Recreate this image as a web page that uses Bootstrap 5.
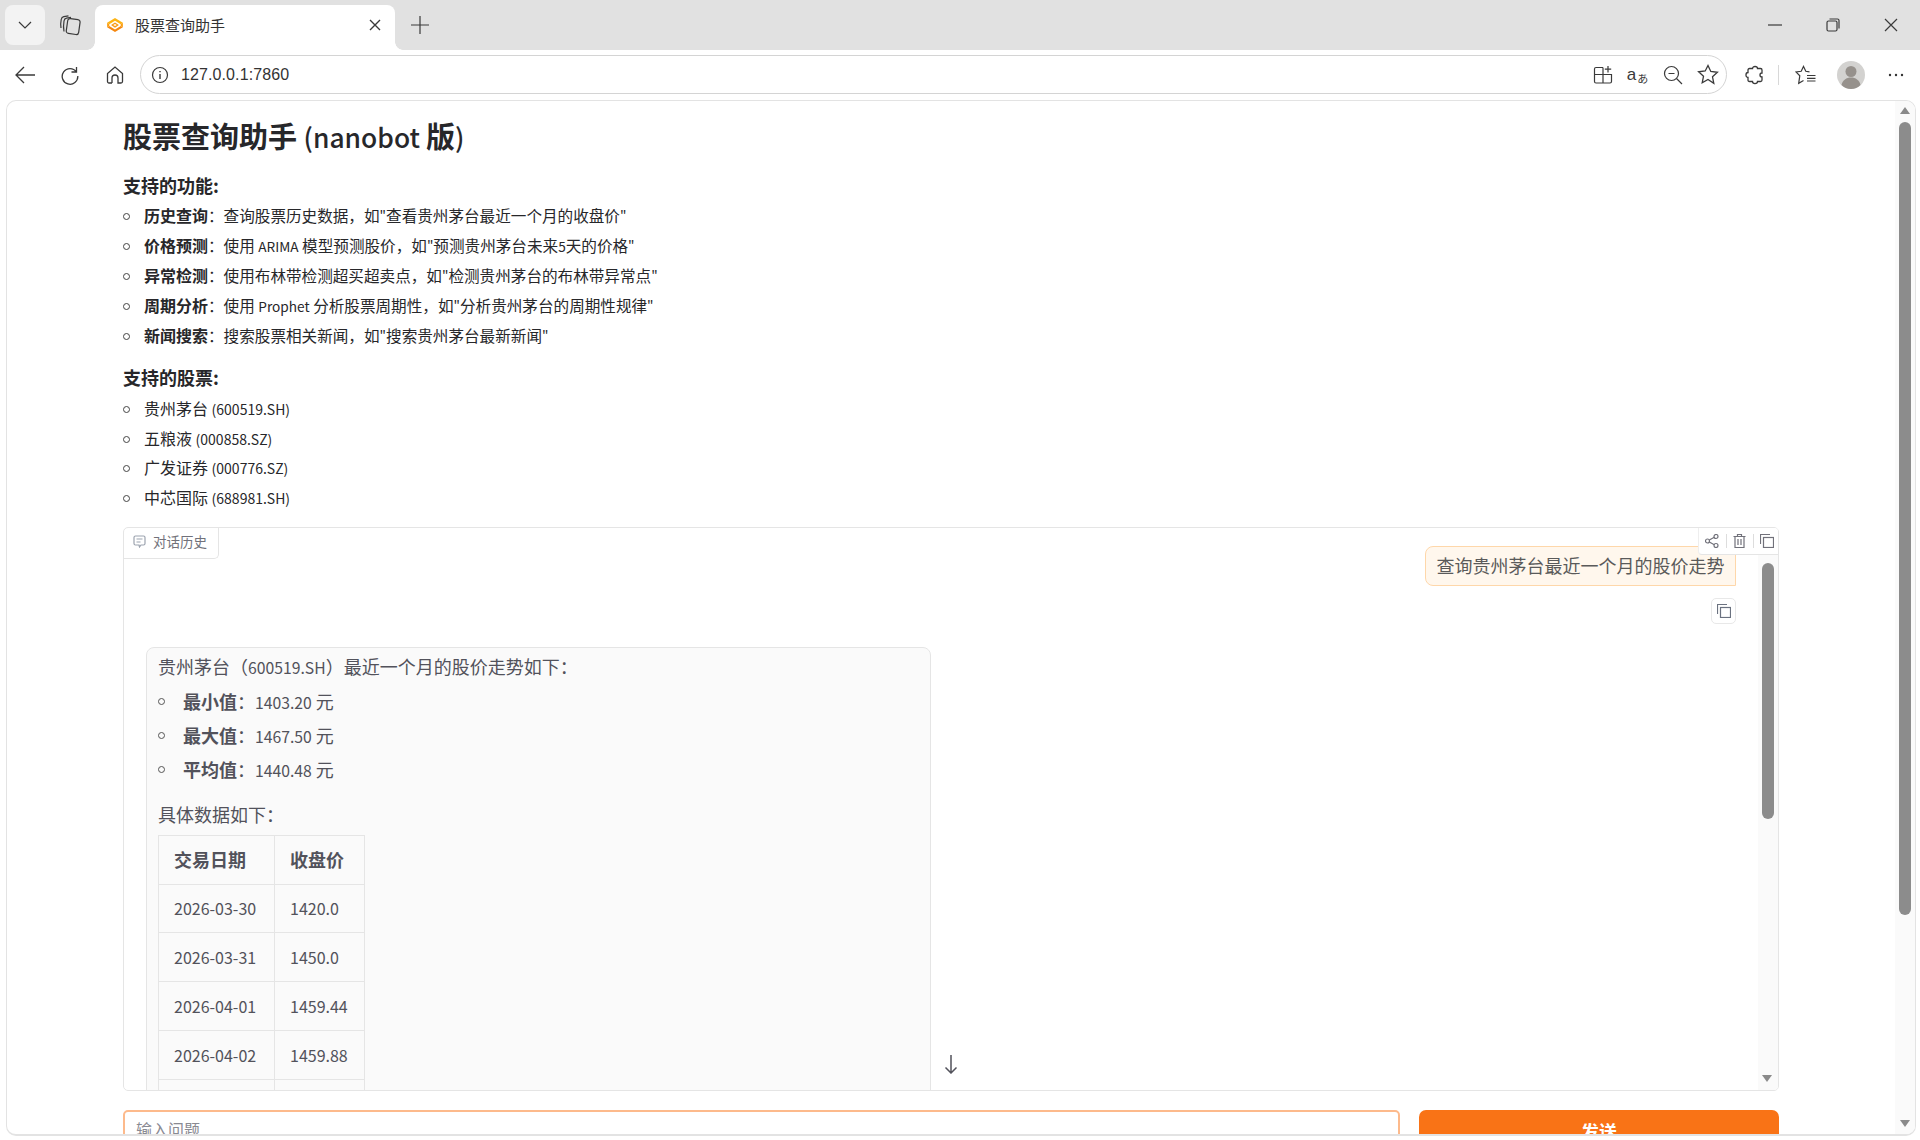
<!DOCTYPE html>
<html lang="zh">
<head>
<meta charset="utf-8">
<title>股票查询助手</title>
<link href="https://cdn.jsdelivr.net/npm/bootstrap@5.3.0/dist/css/bootstrap.min.css" rel="stylesheet">
<style>
html,body{height:1140px;overflow:hidden}
body{background:#fff;font-family:"Noto Sans CJK SC","Liberation Sans",sans-serif;color:#27272a;font-size:16px}
svg{display:block;fill:none;stroke:#3a3a3a;stroke-width:1.2}
.lat{font-size:.875em}
.tabbar{height:50px;background:#e1e1e1;padding:5px 0 0 5px}
.tabmenu{width:40px;height:40px;background:#f3f3f3;border-radius:8px}
.tabcoll{width:50px;height:40px}
.tabitem{position:relative;width:300px;height:45px;background:#fff;border-radius:8px 8px 0 0;padding:0 14px 5px 12px;font-size:15px;color:#333}
.tabitem::before,.tabitem::after{content:"";position:absolute;bottom:0;width:8px;height:8px}
.tabitem::before{left:-8px;background:radial-gradient(circle at 0 0,transparent 7.5px,#fff 8px)}
.tabitem::after{right:-8px;background:radial-gradient(circle at 100% 0,transparent 7.5px,#fff 8px)}
.tabtitle{margin-left:12px}
.tabplus{width:50px;height:40px}
.wincontrols{margin-left:auto}
.winbtn{width:58px;height:40px}
.toolbar{height:50px;padding:5px 0 6px 0}
.navbtn{width:45px}
.firstnav{margin-left:2px}
.addr{width:1587px;height:39px;margin-left:3px;border:1.5px solid #d4d4d4;border-radius:20px;padding:0 0 0 10px;font-size:16px;color:#333;font-family:"Liberation Sans",sans-serif}
.addr-text{margin-left:12px;letter-spacing:.1px}
.addr-ico{width:35px}
.addr-ico.last{margin-right:1px}
.tb-ico{width:45px}
.tb-ico.puzzle{margin-left:5px}
.tb-sep{width:1px;height:20px;background:#d8d8d8;margin:0 4px 0 1px}
.transa{font-size:17px;line-height:20px;font-family:"Liberation Sans",sans-serif;color:#3a3a3a}
.transb{font-size:11px;line-height:14px;font-family:"Noto Sans CJK JP",sans-serif;color:#3a3a3a;margin-top:6px;margin-left:1px}
.frame{height:1036px;margin:0 4px 0 6px;border:1.5px solid #e3e3e3;border-bottom-width:2px;border-radius:10px;overflow:hidden}
.mainpane{flex:1 1 auto;min-width:0;padding:0 0 0 116px;overflow:hidden}
.pagetitle{font-size:29px;font-weight:700;line-height:36px;margin:16px 0 0;color:#27272a;white-space:nowrap}
.pagetitle .titlelat{font-size:.91em;font-weight:500}
.sectitle{font-size:18px;font-weight:700;line-height:24px;margin:0;color:#27272a}
.sectitle.one{margin-top:18px}
.sectitle.two{margin-top:15px}
.bulleted{list-style:none;margin:0;padding:0}
.bulleted li{position:relative;padding-left:21px;height:30px;line-height:30px;font-size:16px;color:#27272a}
.bulleted li::before{content:"";position:absolute;left:0;top:13px;width:7px;height:7px;border:1px solid #444;border-radius:50%}
.bulleted b,.botlist b{font-weight:700}
.funcs{margin-top:3px}
.funcs li{font-size:15.6px}
.funcs b{font-size:16px}
.stocks{margin-top:4px}
.stocks li{height:29.700px}
.chatbox{position:relative;width:1656px;height:564px;margin-top:15.500px;border:1.5px solid #e5e5e5;border-radius:5px;overflow:hidden}
.chatlabel{width:95px;height:31px;border-right:1.5px solid #e5e5e5;border-bottom:1.5px solid #e5e5e5;border-radius:0 0 5px 0;font-size:13.5px;color:#71717a;padding:0 0 4px 9px}
.chatlabel span{margin-left:7px}
.toolgroup{position:absolute;right:0;top:0;width:80px;height:27px;background:#fff;border-left:1px solid #eee;border-bottom:1px solid #e5e5e5;border-radius:0 0 0 4px;z-index:3;padding:0 4px 0 2px}
.tooldiv{width:1px;height:14px;background:#ddd}
.chatmain{position:absolute;inset:0;padding:18px 0 0 22px}
.userwrap{width:1590px}
.userbubble{width:311px;height:40px;background:#fff7ed;border:1.5px solid #fed7aa;border-radius:8px 0 0 8px;font-size:18px;color:#5a5a5a;line-height:37px;padding-left:10.500px;white-space:nowrap}
.copybtn{width:25px;height:26px;border:1.5px solid #e8e8e8;border-radius:5px;margin-top:12px}
.botbubble{width:785px;height:600px;margin-top:22.500px;background:#fafafa;border:1.5px solid #e5e5e5;border-radius:8px 8px 0 0;padding:3px 11px 0;font-size:18px;color:#52525b}
.botp{line-height:31px;margin:0 0 1px}
.botlist{list-style:none;margin:0;padding:0}
.botlist li{position:relative;height:34px;line-height:34px;padding-left:25px}
.botlist li::before{content:"";position:absolute;left:0;top:14px;width:7px;height:7px;border:1px solid #555;border-radius:50%}
.botp2{line-height:34px;margin:11px 0 4px}
.pricetable{border-collapse:collapse;font-size:16px;color:#52525b}
.pricetable th,.pricetable td{border:1.5px solid #e5e5e5;height:48.800px;padding:0 15px;font-weight:400}
.pricetable th{font-weight:700;font-size:18px}
.cola{width:116px}.colb{width:90px}
.arrowdown{position:absolute;left:810px;top:519px;width:34px;height:34px;border-radius:50%;background:#fff;z-index:2}
.innerscroll{position:absolute;right:0;top:0;bottom:0;width:20px;background:#fafafa}
.innerthumb{position:absolute;left:4px;top:35px;width:11.500px;height:256px;background:#8c8c8c;border-radius:6px}
.tri-down{position:absolute;left:4px;bottom:8px;width:0;height:0;border-left:5px solid transparent;border-right:5px solid transparent;border-top:7px solid #8a8a8a}
.sendrow{margin-top:18.500px;width:1656px;gap:19px}
.askinput{flex:1 1 auto;height:80px;border:2px solid #fdba8c;border-radius:5px;padding:7px 11px;font-size:16px;color:#8a8a92;line-height:20px}
.sendbtn{width:360px;height:80px;background:#f97316;border-radius:7px;color:#fff;font-weight:700;font-size:18px;text-align:center;line-height:42px}
.pagescroll{width:20px;background:#fafafa;position:relative;flex:0 0 20px}
.pagethumb{position:absolute;left:4px;top:21px;width:12px;height:793px;background:#8c8c8c;border-radius:6px}
.tri-up{position:absolute;left:5px;top:6px;width:0;height:0;border-left:5px solid transparent;border-right:5px solid transparent;border-bottom:7px solid #8a8a8a}
.tri-down2{position:absolute;left:5px;bottom:7px;width:0;height:0;border-left:5px solid transparent;border-right:5px solid transparent;border-top:7px solid #8a8a8a}
</style>
</head>
<body>
<div class="tabbar d-flex align-items-start">
  <div class="tabmenu d-flex align-items-center justify-content-center"><svg width="14" height="8" viewBox="0 0 14 8"><path d="M1 1l6 6 6-6"/></svg></div>
  <div class="tabcoll d-flex align-items-center justify-content-center"><svg width="22" height="22" viewBox="0 0 22 22"><rect x="8" y="5" width="12.500" height="15" rx="2.500" transform="rotate(8 14 12)"/><path d="M5 17.500C4.300 14 4.500 10 5 7c.2-1.500 1-2.500 2.500-2.800L12 3.300M2 14c-.5-3-.3-6 .2-8.500C2.500 4 3.300 3 4.800 2.700L9.500 1.800"/></svg></div>
  <div class="tabitem d-flex align-items-center">
    <svg width="16" height="14" viewBox="0 0 18 16" style="stroke:none"><path d="M9 0l9 5.500-2.500 1.500L9 3 2.500 7 0 5.500z" fill="#fdb414"/><path d="M0 10.500L2.500 9 9 13l6.500-4 2.500 1.500L9 16z" fill="#f5870f"/><path d="M0 5.500L2.500 7 2.500 9 0 10.500zM18 5.500L15.500 7v2l2.500 1.500z" fill="#fb9f12"/><path d="M9 5l4.500 3L9 11 4.500 8zM9 6.800L7 8l2 1.200L11 8z" fill="#f99a12" fill-rule="evenodd"/></svg>
    <span class="tabtitle">股票查询助手</span>
    <svg class="ms-auto" width="12" height="12" viewBox="0 0 12 12"><path d="M1 1l10 10M11 1L1 11" stroke-width="1.400"/></svg>
  </div>
  <div class="tabplus d-flex align-items-center justify-content-center"><svg width="20" height="20" viewBox="0 0 20 20"><path d="M10 1v18M1 10h18"/></svg></div>
  <div class="wincontrols d-flex">
    <div class="winbtn d-flex align-items-center justify-content-center"><svg width="14" height="2" viewBox="0 0 14 2"><path d="M0 1h14"/></svg></div>
    <div class="winbtn d-flex align-items-center justify-content-center"><svg width="14" height="14" viewBox="0 0 14 14"><rect x="1" y="3" width="10" height="10" rx="1.500"/><path d="M3.500 1h8a1.500 1.500 0 0 1 1.500 1.500v8"/></svg></div>
    <div class="winbtn d-flex align-items-center justify-content-center"><svg width="14" height="14" viewBox="0 0 14 14"><path d="M1 1l12 12M13 1L1 13"/></svg></div>
  </div>
</div>
<div class="toolbar d-flex align-items-center">
  <div class="navbtn firstnav d-flex justify-content-center"><svg width="22" height="20" viewBox="0 0 22 20"><path d="M21 10H2M10 2l-8 8 8 8" stroke-width="1.300"/></svg></div>
  <div class="navbtn d-flex justify-content-center"><svg width="20" height="20" viewBox="0 0 20 20"><path d="M16.500 2v5h-5M16.400 7A7.800 7.800 0 1 0 17.800 11" stroke-width="1.300"/></svg></div>
  <div class="navbtn d-flex justify-content-center"><svg width="20" height="20" viewBox="0 0 20 20"><path d="M7 18H4a1.500 1.500 0 0 1-1.500-1.500V8.500L10 2l7.500 6.500v8A1.500 1.500 0 0 1 16 18h-3v-5a3 3 0 0 0-6 0v5" stroke-width="1.300"/></svg></div>
  <div class="addr d-flex align-items-center">
    <svg width="18" height="18" viewBox="0 0 18 18"><circle cx="9" cy="9" r="7.500"/><path d="M9 8v5M9 5v1.300" stroke-width="1.400"/></svg>
    <span class="addr-text">127.0.0.1:7860</span>
    <div class="ms-auto d-flex align-items-center">
      <div class="addr-ico d-flex justify-content-center"><svg width="20" height="20" viewBox="0 0 20 20"><path d="M10 2.500H3A1.500 1.500 0 0 0 1.500 4v12.500A1.500 1.500 0 0 0 3 18h14a1.500 1.500 0 0 0 1.500-1.500V9.500H1.500M10 2.500V18M15 1v6.500M11.800 4.200h6.400"/></svg></div>
      <div class="addr-ico d-flex justify-content-center"><span class="transa">a</span><span class="transb">&#x3042;</span></div>
      <div class="addr-ico d-flex justify-content-center"><svg width="20" height="20" viewBox="0 0 20 20"><circle cx="8.500" cy="8.500" r="7"/><path d="M5.500 8.500h6M13.500 13.500l5.500 5.500"/></svg></div>
      <div class="addr-ico last d-flex justify-content-center"><svg width="22" height="21" viewBox="0 0 22 21"><path d="M11 1.500l2.800 6 6.600.8-4.900 4.500 1.300 6.500L11 15.500l-5.800 3.300 1.300-6.500-4.900-4.500 6.600-.8z" stroke-width="1.300"/></svg></div>
    </div>
  </div>
  <div class="tb-ico puzzle d-flex justify-content-center"><svg width="20" height="20" viewBox="0 0 20 20"><path d="M7.500 3.500C7.500.8 12.500.8 12.500 3.500H15.500C16.500 3.500 17 4 17 5V8C14.300 8 14.300 12 17 12V15C17 16 16.500 16.500 15.500 16.500H12.500C12.500 19.200 7.500 19.200 7.500 16.500H4.500C3.500 16.500 3 16 3 15V12.500C.3 12.500.3 7.500 3 7.500V5C3 4 3.500 3.500 4.500 3.500Z" stroke-width="1.300"/></svg></div>
  <div class="tb-sep"></div>
  <div class="tb-ico d-flex justify-content-center"><svg width="22" height="20" viewBox="0 0 22 20"><path d="M14.500 6.800L10.800 6.300 8.500 1.500 6.200 6.300 1 7 4.800 10.700 3.700 18.300 8.500 15.600M12 10.500h8.500M12 13.300h8.500M12 16h8.500" stroke-width="1.200"/></svg></div>
  <div class="tb-ico d-flex justify-content-center"><svg width="28" height="28" viewBox="0 0 28 28" style="stroke:none"><circle cx="14" cy="14" r="14" fill="#d3d2d0"/><circle cx="14" cy="10.500" r="5.500" fill="#96918c"/><path d="M4.500 24c1-5 5-7.500 9.500-7.500s8.500 2.500 9.500 7.500A14 14 0 0 1 14 28a14 14 0 0 1-9.500-4z" fill="#96918c"/></svg></div>
  <div class="tb-ico d-flex justify-content-center"><svg width="16" height="4" viewBox="0 0 16 4" style="stroke:none"><circle cx="2" cy="2" r="1.200" fill="#333"/><circle cx="8" cy="2" r="1.200" fill="#333"/><circle cx="14" cy="2" r="1.200" fill="#333"/></svg></div>
</div>
<div class="frame d-flex">
  <main class="mainpane">
    <h1 class="pagetitle">股票查询助手 <span class="titlelat">(nanobot </span>版<span class="titlelat">)</span></h1>
    <h2 class="sectitle one">支持的功能:</h2>
    <ul class="bulleted funcs">
      <li><b>历史查询</b>&#xFF1A;查询股票历史数据&#xFF0C;如<span class="lat">"</span>查看贵州茅台最近一个月的收盘价<span class="lat">"</span></li>
      <li><b>价格预测</b>&#xFF1A;使用 <span class="lat">ARIMA</span> 模型预测股价&#xFF0C;如<span class="lat">"</span>预测贵州茅台未来<span class="lat">5</span>天的价格<span class="lat">"</span></li>
      <li><b>异常检测</b>&#xFF1A;使用布林带检测超买超卖点&#xFF0C;如<span class="lat">"</span>检测贵州茅台的布林带异常点<span class="lat">"</span></li>
      <li><b>周期分析</b>&#xFF1A;使用 <span class="lat">Prophet</span> 分析股票周期性&#xFF0C;如<span class="lat">"</span>分析贵州茅台的周期性规律<span class="lat">"</span></li>
      <li><b>新闻搜索</b>&#xFF1A;搜索股票相关新闻&#xFF0C;如<span class="lat">"</span>搜索贵州茅台最新新闻<span class="lat">"</span></li>
    </ul>
    <h2 class="sectitle two">支持的股票:</h2>
    <ul class="bulleted stocks">
      <li>贵州茅台 <span class="lat">(600519.SH)</span></li>
      <li>五粮液 <span class="lat">(000858.SZ)</span></li>
      <li>广发证券 <span class="lat">(000776.SZ)</span></li>
      <li>中芯国际 <span class="lat">(688981.SH)</span></li>
    </ul>
    <section class="chatbox">
      <div class="chatmain">
        <div class="userwrap d-flex flex-column align-items-end">
          <div class="userbubble">查询贵州茅台最近一个月的股价走势</div>
          <div class="copybtn d-flex align-items-center justify-content-center"><svg width="14" height="14" viewBox="0 0 14 14" style="stroke:#6b7280"><rect x="3.500" y="3.500" width="10" height="10"/><path d="M.5 10V.5H10"/></svg></div>
        </div>
        <div class="botbubble">
          <p class="botp">贵州茅台&#xFF08;<span class="lat">600519.SH</span>&#xFF09;最近一个月的股价走势如下&#xFF1A;</p>
          <ul class="botlist">
            <li><b>最小值</b>&#xFF1A;<span class="lat">1403.20</span> 元</li>
            <li><b>最大值</b>&#xFF1A;<span class="lat">1467.50</span> 元</li>
            <li><b>平均值</b>&#xFF1A;<span class="lat">1440.48</span> 元</li>
          </ul>
          <p class="botp2">具体数据如下&#xFF1A;</p>
          <table class="pricetable">
            <tr><th class="cola">交易日期</th><th class="colb">收盘价</th></tr>
            <tr><td>2026-03-30</td><td>1420.0</td></tr>
            <tr><td>2026-03-31</td><td>1450.0</td></tr>
            <tr><td>2026-04-01</td><td>1459.44</td></tr>
            <tr><td>2026-04-02</td><td>1459.88</td></tr>
            <tr><td>&nbsp;</td><td>&nbsp;</td></tr>
          </table>
        </div>
      </div>
      <div class="chatlabel d-flex align-items-center position-relative">
        <svg width="13" height="13" viewBox="0 0 13 13" style="stroke:#9ca3af"><path d="M1 2.500A1.500 1.500 0 0 1 2.500 1h8A1.500 1.500 0 0 1 12 2.500v6A1.500 1.500 0 0 1 10.500 10H8l-1.500 2L6 10H2.500A1.500 1.500 0 0 1 1 8.500zM3.500 4h6M3.500 7h4"/></svg>
        <span>对话历史</span>
      </div>
      <div class="toolgroup d-flex align-items-center justify-content-between">
        <svg class="ms-1" width="14" height="14" viewBox="0 0 14 14" style="stroke:#71717a"><circle cx="2.500" cy="7" r="2"/><circle cx="11" cy="2.500" r="2"/><circle cx="11" cy="11.500" r="2"/><path d="M4.300 6l5-2.800M4.300 8l5 2.800"/></svg>
        <div class="tooldiv"></div>
        <svg width="13" height="14" viewBox="0 0 13 14" style="stroke:#71717a"><path d="M.5 2.500h12M4.500 2.500V.5h4v2M2 2.500V13.500h9V2.500M5 5v6M8 5v6"/></svg>
        <div class="tooldiv"></div>
        <svg width="14" height="14" viewBox="0 0 14 14" style="stroke:#71717a"><rect x="3.500" y="3.500" width="10" height="10"/><path d="M.5 10V.5H10"/></svg>
      </div>
      <div class="arrowdown d-flex align-items-center justify-content-center"><svg width="14" height="20" viewBox="0 0 14 20" style="stroke:#52525b"><path d="M7 1v18M1.500 13.500L7 19l5.500-5.500" stroke-width="1.500"/></svg></div>
      <div class="innerscroll"><div class="innerthumb"></div><div class="tri-down"></div></div>
    </section>
    <div class="sendrow d-flex">
      <div class="askinput">输入问题</div>
      <div class="sendbtn">发送</div>
    </div>
  </main>
  <aside class="pagescroll"><div class="tri-up"></div><div class="pagethumb"></div><div class="tri-down2"></div></aside>
</div>
<script src="https://cdn.jsdelivr.net/npm/bootstrap@5.3.0/dist/js/bootstrap.bundle.min.js"></script>
</body>
</html>
